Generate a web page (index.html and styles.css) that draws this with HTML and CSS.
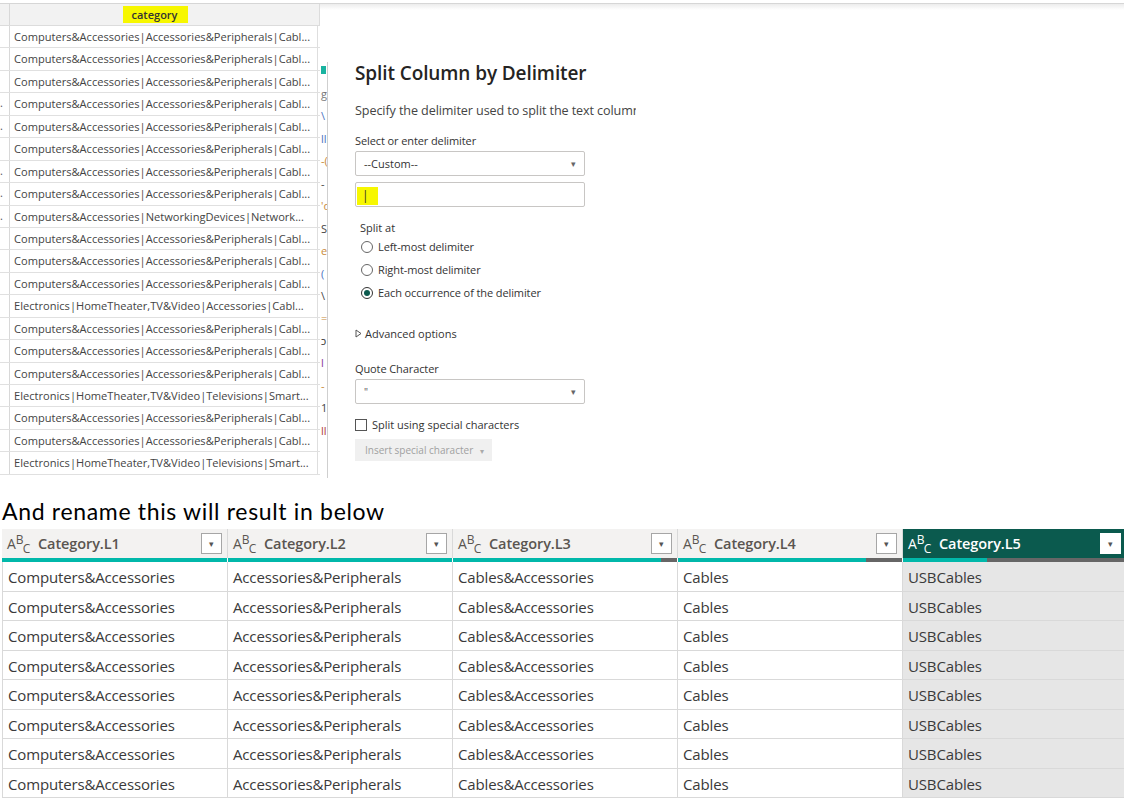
FILE: index.html
```html
<!DOCTYPE html>
<html>
<head>
<meta charset="utf-8">
<link rel="stylesheet" href="styles.css">
</head>
<body>
<div class="top">
  <div class="src">
    <div class="src-head">
      <div class="pre"></div>
      <div class="hcell"><span class="hl">category</span></div>
    </div>
    <div class="src-body">
      <div class="srow"><div class="pre"></div><div class="scell">Computers&amp;Accessories|Accessories&amp;Peripherals|Cabl...</div></div>
      <div class="srow"><div class="pre"></div><div class="scell">Computers&amp;Accessories|Accessories&amp;Peripherals|Cabl...</div></div>
      <div class="srow"><div class="pre"></div><div class="scell">Computers&amp;Accessories|Accessories&amp;Peripherals|Cabl...</div></div>
      <div class="srow"><div class="pre">.</div><div class="scell">Computers&amp;Accessories|Accessories&amp;Peripherals|Cabl...</div></div>
      <div class="srow"><div class="pre">.</div><div class="scell">Computers&amp;Accessories|Accessories&amp;Peripherals|Cabl...</div></div>
      <div class="srow"><div class="pre"></div><div class="scell">Computers&amp;Accessories|Accessories&amp;Peripherals|Cabl...</div></div>
      <div class="srow"><div class="pre">.</div><div class="scell">Computers&amp;Accessories|Accessories&amp;Peripherals|Cabl...</div></div>
      <div class="srow"><div class="pre">.</div><div class="scell">Computers&amp;Accessories|Accessories&amp;Peripherals|Cabl...</div></div>
      <div class="srow"><div class="pre">.</div><div class="scell">Computers&amp;Accessories|NetworkingDevices|Network...</div></div>
      <div class="srow"><div class="pre"></div><div class="scell">Computers&amp;Accessories|Accessories&amp;Peripherals|Cabl...</div></div>
      <div class="srow"><div class="pre"></div><div class="scell">Computers&amp;Accessories|Accessories&amp;Peripherals|Cabl...</div></div>
      <div class="srow"><div class="pre"></div><div class="scell">Computers&amp;Accessories|Accessories&amp;Peripherals|Cabl...</div></div>
      <div class="srow"><div class="pre"></div><div class="scell">Electronics|HomeTheater,TV&amp;Video|Accessories|Cabl...</div></div>
      <div class="srow"><div class="pre"></div><div class="scell">Computers&amp;Accessories|Accessories&amp;Peripherals|Cabl...</div></div>
      <div class="srow"><div class="pre"></div><div class="scell">Computers&amp;Accessories|Accessories&amp;Peripherals|Cabl...</div></div>
      <div class="srow"><div class="pre"></div><div class="scell">Computers&amp;Accessories|Accessories&amp;Peripherals|Cabl...</div></div>
      <div class="srow"><div class="pre"></div><div class="scell">Electronics|HomeTheater,TV&amp;Video|Televisions|Smart...</div></div>
      <div class="srow"><div class="pre"></div><div class="scell">Computers&amp;Accessories|Accessories&amp;Peripherals|Cabl...</div></div>
      <div class="srow"><div class="pre"></div><div class="scell">Computers&amp;Accessories|Accessories&amp;Peripherals|Cabl...</div></div>
      <div class="srow"><div class="pre"></div><div class="scell">Electronics|HomeTheater,TV&amp;Video|Televisions|Smart...</div></div>
    </div>
  </div>
  <div class="strip">
    <div class="sg teal"></div>
    <div class="sg"><span class="c1">g</span></div>
    <div class="sg"><span class="c2">\</span></div>
    <div class="sg"><span class="c3">ll</span></div>
    <div class="sg"><span class="c4">-(</span></div>
    <div class="sg"><span>-</span></div>
    <div class="sg"><span class="c4">'d</span></div>
    <div class="sg"><span>S</span></div>
    <div class="sg"><span class="c4">e</span></div>
    <div class="sg"><span class="c3">(</span></div>
    <div class="sg"><span>\</span></div>
    <div class="sg"><span class="c4">=</span></div>
    <div class="sg"><span>ɔ</span></div>
    <div class="sg"><span class="c5">l</span></div>
    <div class="sg"><span class="c4">-</span></div>
    <div class="sg"><span>1</span></div>
    <div class="sg"><span class="c6">ll</span></div>
  </div>
  <div class="dialog">
    <h1 class="title">Split Column by Delimiter</h1>
    <p class="desc">Specify the delimiter used to split the text column</p>
    <div class="label">Select or enter delimiter</div>
    <div class="select"><span>--Custom--</span><span class="arrow">&#9662;</span></div>
    <div class="input"><span class="hlbox">|</span></div>
    <div class="splitat">Split at</div>
    <div class="radio first"><span class="rb"></span>Left-most delimiter</div>
    <div class="radio"><span class="rb"></span>Right-most delimiter</div>
    <div class="radio"><span class="rb on"></span>Each occurrence of the delimiter</div>
    <div class="adv"><svg width="7" height="9" viewBox="0 0 7 9"><path d="M1 1 L6 4.5 L1 8 Z" fill="none" stroke="#555" stroke-width="1"/></svg>Advanced options</div>
    <div class="label q-label">Quote Character</div>
    <div class="select"><span class="q">"</span><span class="arrow">&#9662;</span></div>
    <div class="check"><span class="cb"></span>Split using special characters</div>
    <div class="btn">Insert special character <span class="arrow small">&#9662;</span></div>
  </div>
</div>
<div class="caption">And rename this will result in below</div>
<div class="grid">
  <div class="ghead">
    <div class="gh"><span class="abc">A<sup>B</sup><sub>C</sub></span><span class="gname">Category.L1</span><span class="dd">&#9662;</span></div>
    <div class="gh"><span class="abc">A<sup>B</sup><sub>C</sub></span><span class="gname">Category.L2</span><span class="dd">&#9662;</span></div>
    <div class="gh"><span class="abc">A<sup>B</sup><sub>C</sub></span><span class="gname">Category.L3</span><span class="dd">&#9662;</span></div>
    <div class="gh"><span class="abc">A<sup>B</sup><sub>C</sub></span><span class="gname">Category.L4</span><span class="dd">&#9662;</span></div>
    <div class="gh sel"><span class="abc">A<sup>B</sup><sub>C</sub></span><span class="gname">Category.L5</span><span class="dd">&#9662;</span></div>
  </div>
  <div class="gbars">
    <div class="bar"><div class="fill" style="width:100%"></div></div>
    <div class="bar"><div class="fill" style="width:100%"></div></div>
    <div class="bar"><div class="fill" style="width:93%"></div></div>
    <div class="bar"><div class="fill" style="width:84%"></div></div>
    <div class="bar"><div class="fill" style="width:38%"></div></div>
  </div>
  <div class="grow"><div class="gc">Computers&amp;Accessories</div><div class="gc">Accessories&amp;Peripherals</div><div class="gc">Cables&amp;Accessories</div><div class="gc">Cables</div><div class="gc sel">USBCables</div></div>
  <div class="grow"><div class="gc">Computers&amp;Accessories</div><div class="gc">Accessories&amp;Peripherals</div><div class="gc">Cables&amp;Accessories</div><div class="gc">Cables</div><div class="gc sel">USBCables</div></div>
  <div class="grow"><div class="gc">Computers&amp;Accessories</div><div class="gc">Accessories&amp;Peripherals</div><div class="gc">Cables&amp;Accessories</div><div class="gc">Cables</div><div class="gc sel">USBCables</div></div>
  <div class="grow"><div class="gc">Computers&amp;Accessories</div><div class="gc">Accessories&amp;Peripherals</div><div class="gc">Cables&amp;Accessories</div><div class="gc">Cables</div><div class="gc sel">USBCables</div></div>
  <div class="grow"><div class="gc">Computers&amp;Accessories</div><div class="gc">Accessories&amp;Peripherals</div><div class="gc">Cables&amp;Accessories</div><div class="gc">Cables</div><div class="gc sel">USBCables</div></div>
  <div class="grow"><div class="gc">Computers&amp;Accessories</div><div class="gc">Accessories&amp;Peripherals</div><div class="gc">Cables&amp;Accessories</div><div class="gc">Cables</div><div class="gc sel">USBCables</div></div>
  <div class="grow"><div class="gc">Computers&amp;Accessories</div><div class="gc">Accessories&amp;Peripherals</div><div class="gc">Cables&amp;Accessories</div><div class="gc">Cables</div><div class="gc sel">USBCables</div></div>
  <div class="grow"><div class="gc">Computers&amp;Accessories</div><div class="gc">Accessories&amp;Peripherals</div><div class="gc">Cables&amp;Accessories</div><div class="gc">Cables</div><div class="gc sel">USBCables</div></div>
</div>
</body>
</html>
```
FILE: styles.css
```css
* { box-sizing: border-box; }
html, body { margin: 0; padding: 0; background: #fff; }
body {
  width: 1124px;
  height: 805px;
  overflow: hidden;
  font-family: "Open Sans", "Noto Sans", sans-serif;
  color: #333;
}
.top {
  display: flex;
  height: 475px;
  margin-top: 3px;
  border-top: 1px solid #d6d6d6;
  background: linear-gradient(#ececec 0, #fff 6px);
}
.src { width: 320px; flex: none; }
.src-head {
  display: flex;
  height: 22px;
  background: #f2f2f2;
  border-bottom: 1px solid #dcdcdc;
}
.pre { width: 10px; flex: none; border-right: 1px solid #d8d8d8; font-size: 11px; color: #555; line-height: 20px; overflow: hidden; }
.hcell {
  flex: 1;
  text-align: center;
  border-right: 1px solid #dcdcdc;
  padding-top: 3px;
}
.hl {
  display: inline-block;
  background: #f7f700;
  padding: 0 11px 0 9px;
  font-size: 11px;
  line-height: 17px;
  font-weight: 600;
  color: #333;
  margin-left: -18px;
  vertical-align: top;
  margin-top: -1px;
}
.srow {
  display: flex;
  height: 22.45px;
  border-bottom: 1px solid #e0e0e0;
}
.scell {
  flex: 1;
  padding-left: 4px;
  font-size: 11.1px;
  line-height: 21px;
  color: #444;
  white-space: nowrap;
  overflow: hidden;
  border-right: 1px solid #dedede;
  margin-right: 2px;
}
.strip {
  width: 8px;
  flex: none;
  margin-top: 58px;
  border-right: 1px solid #cfcfcf;
  font-size: 11px;
  color: #444;
  overflow: hidden;
}
.sg { height: 22.45px; line-height: 20px; padding-left: 1px; overflow: hidden; white-space: nowrap; }
.sg.teal { height: 8px; margin-top: 4px; margin-bottom: 10px; width: 5px; margin-left: 1px; background: #19b3a0; }
.c1 { color: #777; }
.c2 { color: #4a72c0; }
.c3 { color: #4a72c0; }
.c4 { color: #c98a3a; }
.c5 { color: #8a3a9a; }
.c6 { color: #b04040; }
.dialog {
  padding-left: 27px;
  padding-top: 56px;
  color: #333;
}
.title {
  margin: 0;
  font-size: 19px;
  font-weight: 600;
  line-height: 26px;
  color: #252423;
  letter-spacing: -0.1px;
}
.desc {
  margin: 16px 0 0;
  font-size: 12.6px;
  line-height: 18px;
  color: #444;
  letter-spacing: -0.1px;
  white-space: nowrap;
  width: 281px;
  overflow: hidden;
}
.label {
  margin-top: 13px;
  font-size: 11px;
  line-height: 15px;
  color: #333;
  letter-spacing: -0.1px;
}
.select, .input {
  width: 230px;
  height: 25px;
  border: 1px solid #c8c6c4;
  border-radius: 2px;
  display: flex;
  align-items: center;
  justify-content: space-between;
  padding: 0 8px 0 8px;
  font-size: 11px;
  color: #333;
  margin-top: 3px;
}
.input { margin-top: 6px; padding-left: 1px; justify-content: flex-start; }
.hlbox {
  display: inline-block;
  background: #f7f700;
  width: 21px;
  height: 18px;
  line-height: 18px;
  padding-left: 5px;
  font-size: 12px;
  margin-top: 2px;
}
.arrow { font-size: 9px; color: #666; }
.arrow.small { font-size: 8px; color: #aaa; margin-left: 4px; }
.q { font-size: 10px; color: #555; }
.splitat { margin-top: 13px; padding-left: 5px; font-size: 11px; line-height: 15px; }
.radio {
  display: flex;
  align-items: center;
  padding-left: 6px;
  margin-top: 8px;
  font-size: 11px;
  line-height: 15px;
  letter-spacing: -0.1px;
}
.radio.first { margin-top: 4px; }
.rb {
  width: 12px; height: 12px;
  border: 1px solid #666;
  border-radius: 50%;
  margin-right: 5px;
  flex: none;
  position: relative;
  background: #fff;
}
.rb.on { border-color: #333; }
.rb.on::after {
  content: "";
  position: absolute;
  left: 2px; top: 2px;
  width: 6px; height: 6px;
  border-radius: 50%;
  background: #0b5a4e;
}
.adv {
  margin-top: 26px;
  display: flex;
  align-items: center;
  gap: 3px;
  font-size: 11px;
  line-height: 15px;
}
.label.q-label { margin-top: 20px; }
.check {
  margin-top: 13px;
  display: flex;
  align-items: center;
  font-size: 11px;
  line-height: 15px;
}
.cb { width: 12px; height: 12px; border: 1px solid #555; margin-right: 5px; background: #fff; }
.btn {
  margin-top: 7px;
  width: 137px;
  height: 22px;
  background: #f0f0f0;
  color: #a0a0a0;
  font-size: 10px;
  line-height: 22px;
  padding-left: 10px;
  white-space: nowrap;
}
.caption {
  font-family: Lato, "Liberation Sans", sans-serif;
  font-size: 23px;
  line-height: 26px;
  height: 26px;
  margin-top: 20px;
  padding-left: 2px;
  color: #000;
  letter-spacing: 0.67px;
}
.grid {
  margin-top: 5px;
  margin-left: 2px;
  width: 1122px;
}
.ghead { display: grid; grid-template-columns: 226px 225px 225px 225px 221px; height: 29px; background: #f3f2f1; }
.gh {
  display: flex;
  align-items: center;
  border-right: 1px solid #d9d9d9;
  padding-left: 5px;
  color: #5a5550;
}
.gh.sel { background: #0b5a4e; color: #fff; border-right: none; }
.abc { font-size: 14px; width: 31px; flex: none; line-height: 20px; white-space: nowrap; }
.abc sup { font-size: 12px; vertical-align: 5px; line-height: 0; }
.abc sub { font-size: 12px; vertical-align: -4px; margin-left: -1px; line-height: 0; }
.gname { font-size: 14.5px; font-weight: 600; letter-spacing: -0.1px; }
.dd {
  margin-left: auto;
  margin-right: 5px;
  width: 21px;
  height: 21px;
  border: 1px solid #a6a6a6;
  background: #fff;
  color: #555;
  font-size: 9px;
  line-height: 19px;
  text-align: center;
}
.gh.sel .dd { border-color: #fff; margin-right: 3px; }
.gbars { display: grid; grid-template-columns: 226px 225px 225px 225px 221px; height: 4px; }
.bar { background: #666; border-right: 1px solid #fff; }
.bar:last-child { border-right: none; }
.fill { height: 100%; background: #01b8aa; }
.grow { display: grid; grid-template-columns: 226px 225px 225px 225px 221px; height: 29.5px; border-bottom: 1px solid #d9d9d9; }
.gc {
  padding-left: 5px;
  padding-top: 1px;
  font-size: 15px;
  line-height: 28px;
  color: #3a3a3a;
  border-right: 1px solid #d9d9d9;
  white-space: nowrap;
  overflow: hidden;
  letter-spacing: -0.15px;
}
.gc:first-child { border-left: 1px solid #d9d9d9; }
.gc.sel { background: #e6e6e6; border-right: none; }
```
